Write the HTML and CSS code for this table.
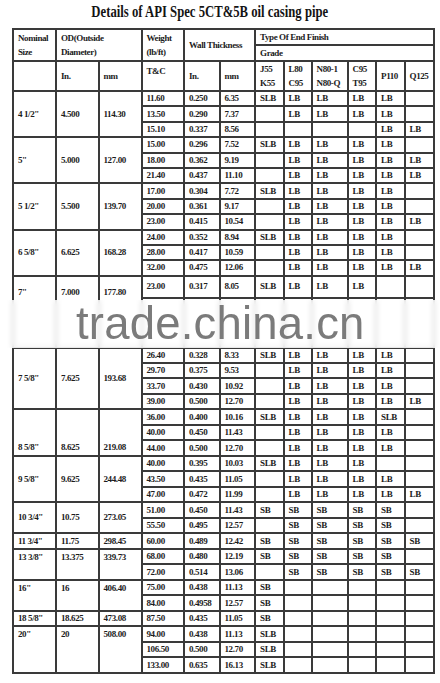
FILE: index.html
```html
<!DOCTYPE html>
<html>
<head>
<meta charset="utf-8">
<link rel="stylesheet" href="styles.css">
</head>
<body>
<div class="page">
  <h1 class="title"><span>Details of API Spec 5CT&amp;5B oil casing pipe</span></h1>
  <table class="spec">
    <colgroup>
      <col class="c-nom"><col class="c-odin"><col class="c-odmm"><col class="c-wt">
      <col class="c-thin"><col class="c-thmm">
      <col class="c-g1"><col class="c-g2"><col class="c-g3"><col class="c-g4"><col class="c-g5"><col class="c-g6">
    </colgroup>
    <thead>
      <tr class="h1">
        <th rowspan="2">Nominal<br>Size</th>
        <th colspan="2" rowspan="2">OD(Outside<br>Diameter)</th>
        <th rowspan="2">Weight<br>(lb/ft)</th>
        <th colspan="2" rowspan="2" class="nowrap">Wall Thickness</th>
        <th colspan="6">Type Of End Finish</th>
      </tr>
      <tr class="h2"><th colspan="6">Grade</th></tr>
      <tr class="h3">
        <th></th><th>In.</th><th>mm</th><th class="top">T&amp;C</th><th>In.</th><th>mm</th>
        <th>J55<br>K55</th><th>L80<br>C95</th><th>N80-1<br>N80-Q</th><th>C95<br>T95</th><th>P110</th><th>Q125</th>
      </tr>
    </thead>
    <tbody>
      <tr><td rowspan="3">4 1/2"</td><td rowspan="3">4.500</td><td rowspan="3">114.30</td><td>11.60</td><td>0.250</td><td>6.35</td><td>SLB</td><td>LB</td><td>LB</td><td>LB</td><td>LB</td><td></td></tr>
      <tr><td>13.50</td><td>0.290</td><td>7.37</td><td></td><td>LB</td><td>LB</td><td>LB</td><td>LB</td><td></td></tr>
      <tr><td>15.10</td><td>0.337</td><td>8.56</td><td></td><td></td><td></td><td></td><td>LB</td><td>LB</td></tr>

      <tr><td rowspan="3">5"</td><td rowspan="3">5.000</td><td rowspan="3">127.00</td><td>15.00</td><td>0.296</td><td>7.52</td><td>SLB</td><td>LB</td><td>LB</td><td>LB</td><td>LB</td><td></td></tr>
      <tr><td>18.00</td><td>0.362</td><td>9.19</td><td></td><td>LB</td><td>LB</td><td>LB</td><td>LB</td><td>LB</td></tr>
      <tr><td>21.40</td><td>0.437</td><td>11.10</td><td></td><td>LB</td><td>LB</td><td>LB</td><td>LB</td><td>LB</td></tr>

      <tr><td rowspan="3">5 1/2"</td><td rowspan="3">5.500</td><td rowspan="3">139.70</td><td>17.00</td><td>0.304</td><td>7.72</td><td>SLB</td><td>LB</td><td>LB</td><td>LB</td><td>LB</td><td></td></tr>
      <tr><td>20.00</td><td>0.361</td><td>9.17</td><td></td><td>LB</td><td>LB</td><td>LB</td><td>LB</td><td></td></tr>
      <tr><td>23.00</td><td>0.415</td><td>10.54</td><td></td><td>LB</td><td>LB</td><td>LB</td><td>LB</td><td>LB</td></tr>

      <tr><td rowspan="3">6 5/8"</td><td rowspan="3">6.625</td><td rowspan="3">168.28</td><td>24.00</td><td>0.352</td><td>8.94</td><td>SLB</td><td>LB</td><td>LB</td><td>LB</td><td>LB</td><td></td></tr>
      <tr><td>28.00</td><td>0.417</td><td>10.59</td><td></td><td>LB</td><td>LB</td><td>LB</td><td>LB</td><td></td></tr>
      <tr><td>32.00</td><td>0.475</td><td>12.06</td><td></td><td>LB</td><td>LB</td><td>LB</td><td>LB</td><td>LB</td></tr>

      <tr class="tall"><td rowspan="2" class="seven">7"</td><td rowspan="2" class="seven">7.000</td><td rowspan="2" class="seven">177.80</td><td>23.00</td><td>0.317</td><td>8.05</td><td>SLB</td><td>LB</td><td>LB</td><td>LB</td><td></td><td></td></tr>
      <tr class="hidden-row"><td></td><td></td><td></td><td></td><td></td><td></td><td></td><td></td><td></td></tr>

      <tr><td rowspan="4">7 5/8"</td><td rowspan="4">7.625</td><td rowspan="4">193.68</td><td>26.40</td><td>0.328</td><td>8.33</td><td>SLB</td><td>LB</td><td>LB</td><td>LB</td><td>LB</td><td></td></tr>
      <tr><td>29.70</td><td>0.375</td><td>9.53</td><td></td><td>LB</td><td>LB</td><td>LB</td><td>LB</td><td></td></tr>
      <tr><td>33.70</td><td>0.430</td><td>10.92</td><td></td><td>LB</td><td>LB</td><td>LB</td><td>LB</td><td></td></tr>
      <tr><td>39.00</td><td>0.500</td><td>12.70</td><td></td><td>LB</td><td>LB</td><td>LB</td><td>LB</td><td>LB</td></tr>

      <tr class="lo"><td rowspan="3" class="bot">8 5/8"</td><td rowspan="3" class="bot">8.625</td><td rowspan="3" class="bot">219.08</td><td>36.00</td><td>0.400</td><td>10.16</td><td>SLB</td><td>LB</td><td>LB</td><td>LB</td><td>SLB</td><td></td></tr>
      <tr class="lo"><td>40.00</td><td>0.450</td><td>11.43</td><td></td><td>LB</td><td>LB</td><td>LB</td><td>LB</td><td></td></tr>
      <tr class="lo"><td>44.00</td><td>0.500</td><td>12.70</td><td></td><td>LB</td><td>LB</td><td>LB</td><td>LB</td><td></td></tr>

      <tr class="lo"><td rowspan="3">9 5/8"</td><td rowspan="3">9.625</td><td rowspan="3">244.48</td><td>40.00</td><td>0.395</td><td>10.03</td><td>SLB</td><td>LB</td><td>LB</td><td>LB</td><td></td><td></td></tr>
      <tr class="lo"><td>43.50</td><td>0.435</td><td>11.05</td><td></td><td>LB</td><td>LB</td><td>LB</td><td>LB</td><td></td></tr>
      <tr class="lo"><td>47.00</td><td>0.472</td><td>11.99</td><td></td><td>LB</td><td>LB</td><td>LB</td><td>LB</td><td>LB</td></tr>

      <tr class="lo"><td rowspan="2">10 3/4"</td><td rowspan="2">10.75</td><td rowspan="2">273.05</td><td>51.00</td><td>0.450</td><td>11.43</td><td>SB</td><td>SB</td><td>SB</td><td>SB</td><td>SB</td><td></td></tr>
      <tr class="lo"><td>55.50</td><td>0.495</td><td>12.57</td><td></td><td>SB</td><td>SB</td><td>SB</td><td>SB</td><td></td></tr>

      <tr class="lo"><td>11 3/4"</td><td>11.75</td><td>298.45</td><td>60.00</td><td>0.489</td><td>12.42</td><td>SB</td><td>SB</td><td>SB</td><td>SB</td><td>SB</td><td>SB</td></tr>

      <tr class="lo"><td rowspan="2" class="top">13 3/8"</td><td rowspan="2" class="top">13.375</td><td rowspan="2" class="top">339.73</td><td>68.00</td><td>0.480</td><td>12.19</td><td>SB</td><td>SB</td><td>SB</td><td>SB</td><td>SB</td><td></td></tr>
      <tr class="lo"><td>72.00</td><td>0.514</td><td>13.06</td><td></td><td>SB</td><td>SB</td><td>SB</td><td>SB</td><td>SB</td></tr>

      <tr class="lo"><td rowspan="2" class="top">16"</td><td rowspan="2" class="top">16</td><td rowspan="2" class="top">406.40</td><td>75.00</td><td>0.438</td><td>11.13</td><td>SB</td><td></td><td></td><td></td><td></td><td></td></tr>
      <tr class="lo"><td>84.00</td><td>0.4958</td><td>12.57</td><td>SB</td><td></td><td></td><td></td><td></td><td></td></tr>

      <tr class="lo"><td>18 5/8"</td><td>18.625</td><td>473.08</td><td>87.50</td><td>0.435</td><td>11.05</td><td>SB</td><td></td><td></td><td></td><td></td><td></td></tr>

      <tr class="lo"><td rowspan="3" class="top">20"</td><td rowspan="3" class="top">20</td><td rowspan="3" class="top">508.00</td><td>94.00</td><td>0.438</td><td>11.13</td><td>SLB</td><td></td><td></td><td></td><td></td><td></td></tr>
      <tr class="lo"><td>106.50</td><td>0.500</td><td>12.70</td><td>SLB</td><td></td><td></td><td></td><td></td><td></td></tr>
      <tr class="lo"><td>133.00</td><td>0.635</td><td>16.13</td><td>SLB</td><td></td><td></td><td></td><td></td><td></td></tr>
    </tbody>
  </table>
  <div class="watermark">trade.china.cn</div>
</div>
</body>
</html>
```

FILE: styles.css
```css
html, body {
  margin: 0;
  padding: 0;
  background: #ffffff;
}

.page {
  position: relative;
  width: 440px;
  height: 683px;
  overflow: hidden;
  font-family: "Liberation Serif", "Times New Roman", serif;
  color: #1c1c1c;
}

.title {
  margin: 2px 0 0 0;
  padding-right: 20px;
  height: 20px;
  line-height: 20px;
  font-size: 16.5px;
  font-weight: bold;
  text-align: center;
  color: #141414;
}

.title span {
  display: inline-block;
  transform: scaleX(0.77);
  transform-origin: center;
  white-space: nowrap;
}

.spec {
  margin: 6px 0 0 12px;
  width: 421px;
  table-layout: fixed;
  border-collapse: collapse;
  border: 2px solid #2e2e2e;
  font-size: 9px;
  font-weight: bold;
  letter-spacing: -0.4px;
}

.c-nom { width: 43px; }
.c-odin { width: 42.5px; }
.c-odmm { width: 43px; }
.c-wt { width: 42.5px; }
.c-thin { width: 35.5px; }
.c-thmm { width: 35.5px; }
.c-g1 { width: 28.5px; }
.c-g2 { width: 28px; }
.c-g3 { width: 36px; }
.c-g4 { width: 28.5px; }
.c-g5 { width: 28.5px; }
.c-g6 { width: 29px; }

.spec th,
.spec td {
  border: 2px solid #3a3a3a;
  padding: 0 0 0 4px;
  text-align: left;
  vertical-align: middle;
  line-height: 11px;
  overflow: hidden;
  white-space: nowrap;
  font-weight: bold;
}

.spec th {
  line-height: 14px;
}

.h1, .h2 { height: 15px; }
.h3 { height: 30px; }

.spec tbody tr { height: 15.4px; }
.spec tbody tr.lo { height: 15.5px; }
.spec tbody tr.tall { height: 22px; }
.spec tbody tr.hidden-row { height: 50px; }

.spec .top { vertical-align: top; padding-top: 2px; }
.spec .bot { vertical-align: bottom; padding-bottom: 2px; }
.spec .seven { vertical-align: top; padding-top: 10px; }

.nowrap { white-space: nowrap; }

.watermark {
  position: absolute;
  left: 0;
  top: 300px;
  width: 440px;
  height: 48px;
  padding: 1px 0 0 76px;
  box-sizing: border-box;
  background: rgba(255, 255, 255, 0.8);
  backdrop-filter: blur(2.5px);
  font-family: "Liberation Sans", Arial, sans-serif;
  font-size: 45.5px;
  line-height: 46px;
  letter-spacing: 0.2px;
  color: #7b7b7b;
  white-space: nowrap;
}
```
